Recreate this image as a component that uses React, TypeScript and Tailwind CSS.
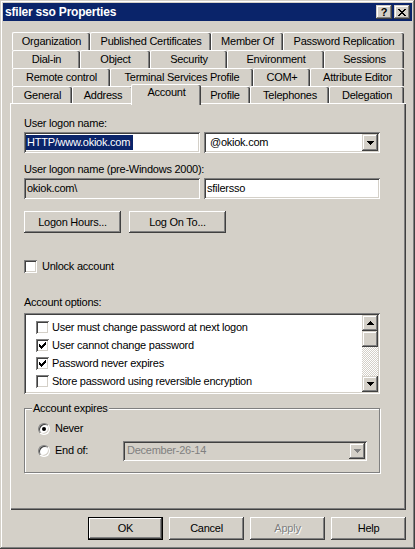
import React from "react";

// classic 3D edges
const raised =
  "shadow-[inset_-1px_-1px_0_#404040,inset_1px_1px_0_#ffffff,inset_-2px_-2px_0_#808080]";
const raisedSb =
  "shadow-[inset_-1px_-1px_0_#404040,inset_1px_1px_0_#d4d0c8,inset_-2px_-2px_0_#808080,inset_2px_2px_0_#ffffff]";
const sunken =
  "shadow-[inset_1px_1px_0_#808080,inset_-1px_-1px_0_#ffffff,inset_2px_2px_0_#404040,inset_-2px_-2px_0_#d4d0c8]";

function DownArrow({ color = "#000000" }: { color?: string }) {
  return (
    <svg width="7" height="4" viewBox="0 0 7 4" shapeRendering="crispEdges">
      <path d="M0 0h7v1H0zM1 1h5v1H1zM2 2h3v1H2zM3 3h1v1H3z" fill={color} />
    </svg>
  );
}

function UpArrow() {
  return (
    <svg width="7" height="4" viewBox="0 0 7 4" shapeRendering="crispEdges">
      <path d="M3 0h1v1H3zM2 1h3v1H2zM1 2h5v1H1zM0 3h7v1H0z" fill="#000000" />
    </svg>
  );
}

function Tab({ label, w, selected }: { label: string; w: number; selected?: boolean }) {
  if (selected) {
    return (
      <div
        className="relative z-10 -mt-[2px] -mx-[2px] h-[21px] bg-[#d4d0c8] border-t border-l border-white rounded-tl-[2px] rounded-tr-[2px] shadow-[inset_-1px_0_0_#404040,inset_-2px_0_0_#808080] flex justify-center pt-[1px] leading-[13px]"
        style={{ width: w + 4 }}
      >
        {label}
      </div>
    );
  }
  return (
    <div
      className="h-full bg-[#d4d0c8] border-t border-l border-white rounded-tl-[2px] rounded-tr-[2px] shadow-[inset_-1px_0_0_#404040,inset_-2px_0_0_#808080] flex justify-center pt-[2px] leading-[13px] whitespace-nowrap"
      style={{ width: w }}
    >
      {label}
    </div>
  );
}

function Check({ checked }: { checked?: boolean }) {
  return (
    <span className={"flex w-[13px] h-[13px] shrink-0 bg-white " + sunken}>
      {checked && (
        <svg width="13" height="13" viewBox="0 0 13 13" shapeRendering="crispEdges">
          <path
            d="M9 3h1v1H9zM8 4h2v1H8zM3 5h1v1H3zM7 5h3v1H7zM3 6h2v1H3zM6 6h3v1H6zM3 7h5v1H3zM4 8h3v1H4zM5 9h1v1H5z"
            fill="#000000"
          />
        </svg>
      )}
    </span>
  );
}

function Radio({ checked }: { checked?: boolean }) {
  return (
    <span className="flex items-center justify-center w-[12px] h-[12px] shrink-0 rounded-full bg-white border border-t-[#808080] border-l-[#808080] border-r-white border-b-white shadow-[inset_1px_1px_0_#404040,inset_-1px_-1px_0_#d4d0c8]">
      {checked && <span className="w-[4px] h-[4px] rounded-full bg-black" />}
    </span>
  );
}

function Btn({ children, w, isDefault, disabled }: { children: React.ReactNode; w: number; isDefault?: boolean; disabled?: boolean }) {
  return (
    <div
      className={
        "h-[23px] flex items-center justify-center bg-[#d4d0c8] " +
        (isDefault ? "border border-black " : "") +
        (disabled ? "text-[#808080] [text-shadow:1px_1px_0_#ffffff] " : "")
      }
      style={{ width: w }}
    >
      <div className={"w-full h-full flex items-center justify-center " + raised}>{children}</div>
    </div>
  );
}

const options = [
  { label: "User must change password at next logon", checked: false },
  { label: "User cannot change password", checked: true },
  { label: "Password never expires", checked: true },
  { label: "Store password using reversible encryption", checked: false },
];

export default function App() {
  return (
    <div className="w-[415px] h-[549px] bg-[#d4d0c8] flex flex-col p-[3px] font-['Liberation_Sans',Arial,sans-serif] text-[11px] tracking-[-0.25px] text-black shadow-[inset_-1px_-1px_0_#404040,inset_1px_1px_0_#d4d0c8,inset_-2px_-2px_0_#808080,inset_2px_2px_0_#ffffff]">
      {/* title bar */}
      <div className="h-[18px] bg-[#0a246a] flex items-center justify-between pl-[2px] pr-[2px]">
        <span className="text-white font-bold text-[12px] tracking-[-0.2px] leading-[14px]">sfiler sso Properties</span>
        <div className="flex gap-[2px]">
          <div className={"w-[16px] h-[14px] bg-[#d4d0c8] flex items-center justify-center font-bold text-[11px] leading-[11px] " + raisedSb}>?</div>
          <div className={"w-[16px] h-[14px] bg-[#d4d0c8] flex items-center justify-center " + raisedSb}>
            <svg width="8" height="7" viewBox="0 0 8 7" shapeRendering="crispEdges">
              <path
                d="M0 0h2v1H0zM6 0h2v1H6zM1 1h2v1H1zM5 1h2v1H5zM2 2h4v1H2zM3 3h2v1H3zM2 4h4v1H2zM1 5h2v1H1zM5 5h2v1H5zM0 6h2v1H0zM6 6h2v1H6z"
                fill="#000000"
              />
            </svg>
          </div>
        </div>
      </div>

      {/* tabs */}
      <div className="mt-[11px] ml-[9px] flex flex-col">
        <div className="flex h-[18px]">
          <Tab label="Organization" w={78} />
          <Tab label="Published Certificates" w={121} />
          <Tab label="Member Of" w={72} />
          <Tab label="Password Replication" w={121} />
        </div>
        <div className="flex h-[18px]">
          <Tab label="Dial-in" w={68} />
          <Tab label="Object" w={70} />
          <Tab label="Security" w={77} />
          <Tab label="Environment" w={97} />
          <Tab label="Sessions" w={80} />
        </div>
        <div className="flex h-[18px]">
          <Tab label="Remote control" w={98} />
          <Tab label="Terminal Services Profile" w={143} />
          <Tab label="COM+" w={57} />
          <Tab label="Attribute Editor" w={94} />
        </div>
        <div className="flex h-[17px] items-start">
          <Tab label="General" w={60} />
          <Tab label="Address" w={61} />
          <Tab label="Account" w={66} selected />
          <Tab label="Profile" w={51} />
          <Tab label="Telephones" w={79} />
          <Tab label="Delegation" w={75} />
        </div>
      </div>

      {/* panel */}
      <div className="ml-[7px] w-[396px] h-[407px] flex flex-col pl-[14px] pt-[14px] shadow-[inset_1px_1px_0_#ffffff,inset_-1px_-1px_0_#404040,inset_-2px_-2px_0_#808080] leading-[13px]">
        <div className="h-[13px]">User logon name:</div>
        <div className="mt-[2px] flex gap-[4px] h-[21px]">
          <div className={"w-[176px] h-full bg-white flex items-center pl-[2px] " + sunken}>
            <span className="bg-[#0a246a] text-white pl-[1px] pr-[3px] leading-[15px]">HTTP/www.okiok.com</span>
          </div>
          <div className={"w-[176px] h-full bg-white flex items-center justify-between pl-[6px] pr-[2px] " + sunken}>
            <span>@okiok.com</span>
            <div className={"w-[16px] h-[17px] bg-[#d4d0c8] flex items-center justify-center " + raisedSb}>
              <DownArrow />
            </div>
          </div>
        </div>

        <div className="mt-[10px] h-[13px]">User logon name (pre-Windows 2000):</div>
        <div className="mt-[2px] flex gap-[4px] h-[21px]">
          <div className={"w-[176px] h-full bg-[#d4d0c8] flex items-center pl-[3px] " + sunken}>okiok.com\</div>
          <div className={"w-[176px] h-full bg-white flex items-center pl-[3px] " + sunken}>sfilersso</div>
        </div>

        <div className="mt-[12px] flex gap-[8px]">
          <div className={"w-[97px] h-[22px] flex items-center justify-center " + raised}>Logon Hours...</div>
          <div className={"w-[97px] h-[22px] flex items-center justify-center " + raised}>Log On To...</div>
        </div>

        <div className="mt-[27px] flex items-center gap-[5px] h-[13px]">
          <Check />
          <span>Unlock account</span>
        </div>

        <div className="mt-[23px] h-[13px]">Account options:</div>
        <div className={"mt-[4px] w-[356px] h-[81px] bg-white flex p-[2px] " + sunken}>
          <div className="flex-1 flex flex-col pt-[3px] pl-[10px]">
            {options.map((o) => (
              <div key={o.label} className="h-[18px] flex items-center gap-[3px]">
                <Check checked={o.checked} />
                <span className="whitespace-nowrap">{o.label}</span>
              </div>
            ))}
          </div>
          <div className="w-[16px] flex flex-col">
            <div className={"h-[16px] bg-[#d4d0c8] flex items-center justify-center " + raisedSb}>
              <UpArrow />
            </div>
            <div className={"h-[16px] bg-[#d4d0c8] " + raisedSb} />
            <div className="flex-1 bg-[repeating-conic-gradient(#ffffff_0%_25%,#d4d0c8_0%_50%)] bg-[length:2px_2px]" />
            <div className={"h-[16px] bg-[#d4d0c8] flex items-center justify-center " + raisedSb}>
              <DownArrow />
            </div>
          </div>
        </div>

        <div className="relative mt-[14px] w-[356px] h-[65px] border border-[#808080] shadow-[inset_1px_1px_0_#ffffff,1px_1px_0_#ffffff] flex flex-col pl-[13px] pt-[13px]">
          <span className="absolute left-[7px] -top-[7px] px-[1px] bg-[#d4d0c8]">Account expires</span>
          <div className="h-[13px] flex items-center">
            <Radio checked />
            <span className="ml-[5px]">Never</span>
          </div>
          <div className="mt-[5px] h-[21px] flex items-center">
            <Radio />
            <span className="ml-[5px] w-[68px]">End of:</span>
            <div className={"w-[244px] h-[20px] bg-[#d4d0c8] flex items-center justify-between pl-[4px] pr-[2px] text-[#808080] " + sunken}>
              <span>December-26-14</span>
              <div className={"w-[16px] h-[16px] bg-[#d4d0c8] flex items-center justify-center " + raisedSb}>
                <DownArrow color="#808080" />
              </div>
            </div>
          </div>
        </div>
      </div>

      {/* dialog buttons */}
      <div className="mt-[7px] flex justify-end gap-[6px] mr-[6px]">
        <Btn w={75} isDefault>
          OK
        </Btn>
        <Btn w={75}>Cancel</Btn>
        <Btn w={75} disabled>
          Apply
        </Btn>
        <Btn w={75}>Help</Btn>
      </div>
    </div>
  );
}
